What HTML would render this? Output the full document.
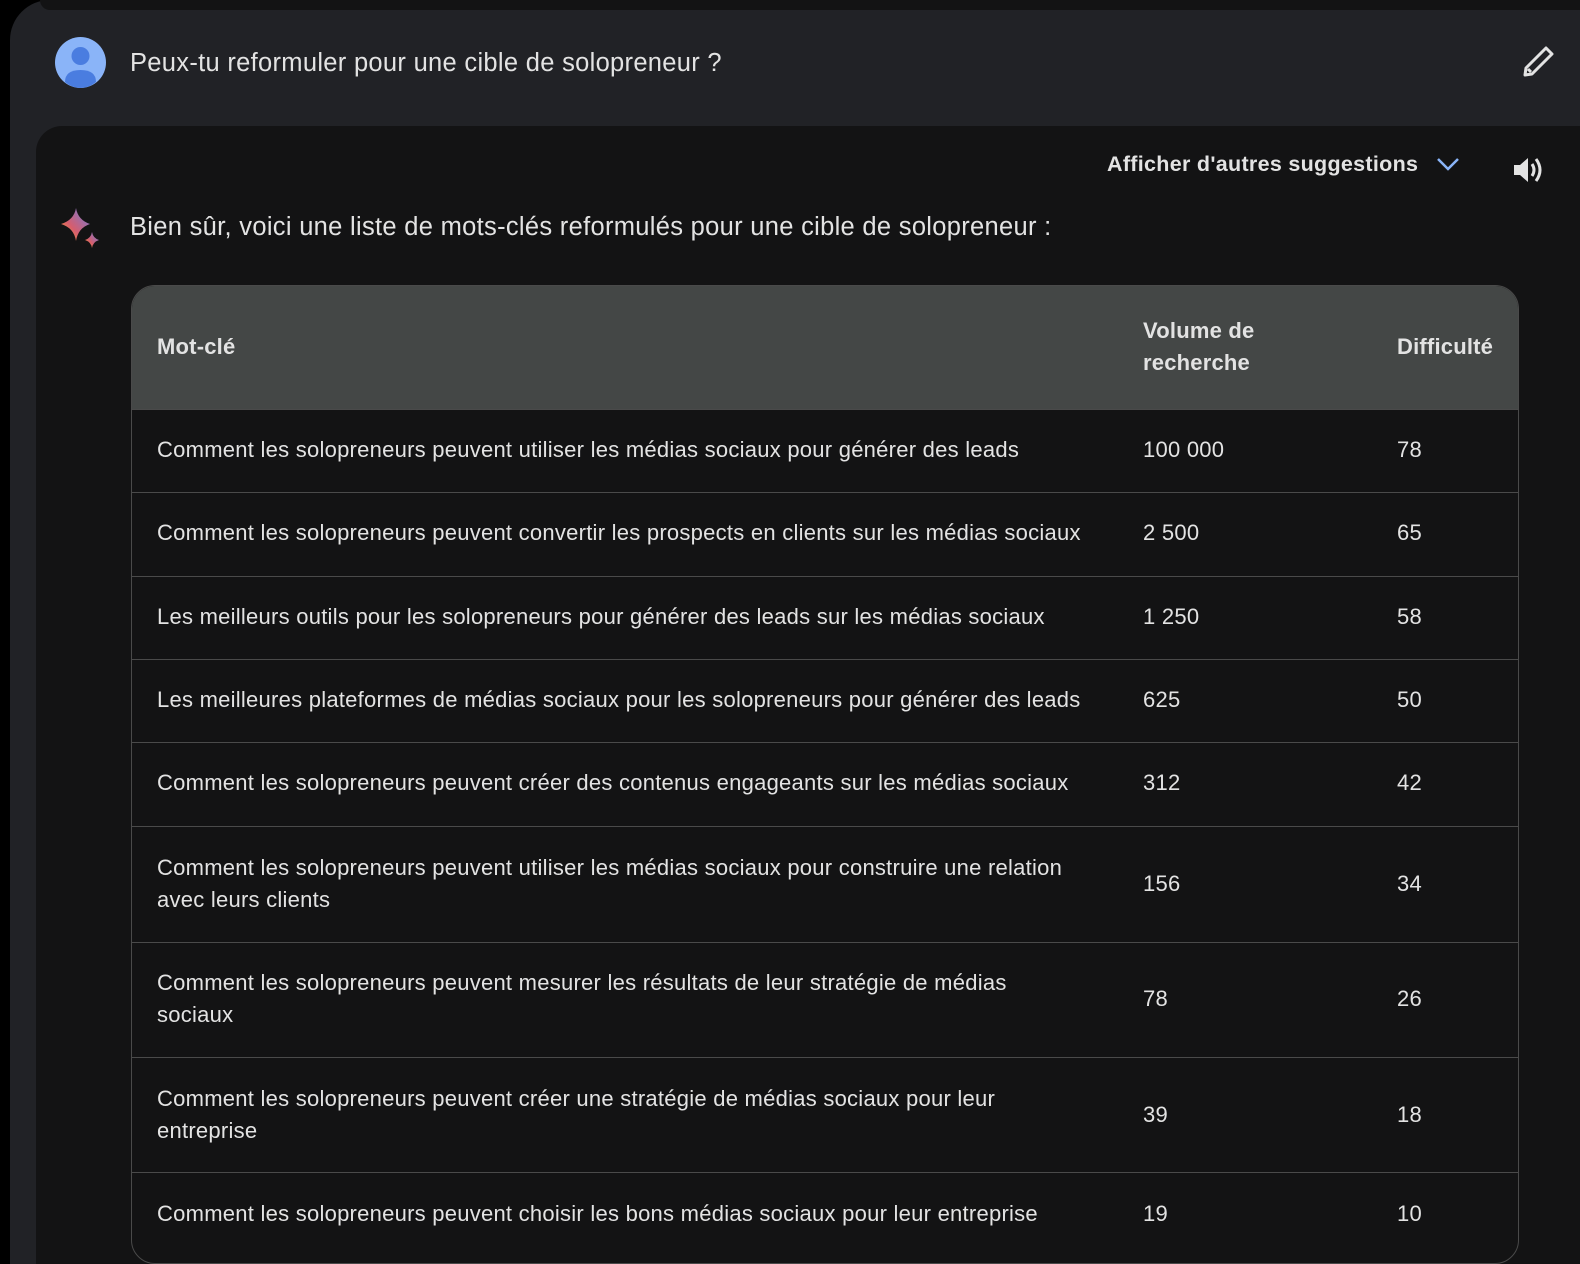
<!DOCTYPE html>
<html style="width:1580px;height:1264px;overflow:hidden"><head><meta charset="utf-8"><style>
*{margin:0;padding:0;box-sizing:border-box}
body{width:1580px;height:1264px;background:#000;overflow:hidden;font-family:"Liberation Sans",Arial,sans-serif;color:#e3e3e3;position:relative}
.outer{position:absolute;left:10px;top:0;width:1570px;height:1264px;background:#212226;border-radius:40px 0 0 0}
.topstrip{position:absolute;left:40px;top:0;width:1540px;height:10px;background:#131314;border-radius:0 0 0 12px}
.resp{position:absolute;left:36px;top:126px;width:1544px;height:1138px;background:#131314;border-radius:26px 0 0 0}
.t{position:absolute;white-space:nowrap;letter-spacing:0.3px}
.tbl{position:absolute;left:131px;top:285px;width:1388px;height:979px;border:1px solid #4a4a4a;border-radius:24px;overflow:hidden}
.hdr{position:absolute;left:0;top:0;width:100%;height:123px;background:#444746}
.row{position:absolute;left:0;width:100%;border-top:1px solid #4a4a4a}
.row div{position:absolute;font-size:22px;line-height:32px;letter-spacing:0.25px;white-space:nowrap}
.c1{left:25px}
.c2{left:1011px}
.c3{left:1265px}
.h{font-weight:bold;font-size:22px;line-height:32px;position:absolute;letter-spacing:0.2px}
</style></head><body>
<div class="outer"></div>
<div class="topstrip"></div>
<svg style="position:absolute;left:55px;top:37px" width="51" height="51" viewBox="0 0 51 51"><circle cx="25.5" cy="25.5" r="25.5" fill="#8ab4f8"/><circle cx="25.5" cy="19" r="9" fill="#4a7de0"/><path d="M10 45 Q10 33 25.5 33 Q41 33 41 45 Q34 51 25.5 51 Q17 51 10 45Z" fill="#4a7de0"/></svg>
<div class="t" style="left:130px;top:47px;font-size:25.5px;line-height:32px">Peux-tu reformuler pour une cible de solopreneur ?</div>
<svg style="position:absolute;left:1520px;top:44px" width="36" height="36" viewBox="0 0 36 36"><path d="M5 31 L6 24 L26 4 L32 10 L12 30 Z M8 25 L11 28" fill="none" stroke="#e3e3e3" stroke-width="3" stroke-linejoin="round"/></svg>
<div class="resp"></div>
<div class="t" style="left:1107px;top:149px;font-size:21.5px;line-height:30px;font-weight:bold">Afficher d'autres suggestions</div>
<svg style="position:absolute;left:1436px;top:156px" width="24" height="16" viewBox="0 0 24 16"><path d="M2 3 L12 13 L22 3" fill="none" stroke="#8ab4f8" stroke-width="2.5"/></svg>
<svg style="position:absolute;left:1512px;top:154px" width="32" height="32" viewBox="0 0 32 32"><path d="M2 11 H8 L16 4 V28 L8 21 H2Z" fill="#e3e3e3"/><path d="M20 10 Q24 16 20 22" fill="none" stroke="#e3e3e3" stroke-width="3"/><path d="M24 5 Q32 16 24 27" fill="none" stroke="#e3e3e3" stroke-width="3"/></svg>
<svg style="position:absolute;left:58px;top:206px" width="44" height="44" viewBox="0 0 44 44"><defs><linearGradient id="g" x1="0" y1="1" x2="1" y2="0"><stop offset="0" stop-color="#f6a623"/><stop offset=".4" stop-color="#d65d6e"/><stop offset="1" stop-color="#6c7fe0"/></linearGradient></defs><path d="M18 2 Q20 14 32 18 Q20 22 18 35 Q16 22 3 18 Q16 14 18 2Z" fill="url(#g)"/><path d="M34 26 Q35 32 41 34 Q35 36 34 42 Q33 36 27 34 Q33 32 34 26Z" fill="url(#g)"/></svg>
<div class="t" style="left:130px;top:211px;font-size:25.5px;line-height:32px">Bien sûr, voici une liste de mots-clés reformulés pour une cible de solopreneur :</div>
<div class="tbl">
<div class="hdr">
<div class="h" style="left:25px;top:45px">Mot-clé</div>
<div class="h" style="left:1011px;top:29px">Volume de<br>recherche</div>
<div class="h" style="left:1265px;top:45px">Difficulté</div>
</div>
<div class="row" style="top:123px;height:83px"><div class="c1" style="top:24px">Comment les solopreneurs peuvent utiliser les médias sociaux pour générer des leads</div><div class="c2" style="top:24px">100 000</div><div class="c3" style="top:24px">78</div></div>
<div class="row" style="top:206px;height:84px"><div class="c1" style="top:24px">Comment les solopreneurs peuvent convertir les prospects en clients sur les médias sociaux</div><div class="c2" style="top:24px">2 500</div><div class="c3" style="top:24px">65</div></div>
<div class="row" style="top:290px;height:83px"><div class="c1" style="top:24px">Les meilleurs outils pour les solopreneurs pour générer des leads sur les médias sociaux</div><div class="c2" style="top:24px">1 250</div><div class="c3" style="top:24px">58</div></div>
<div class="row" style="top:373px;height:83px"><div class="c1" style="top:24px">Les meilleures plateformes de médias sociaux pour les solopreneurs pour générer des leads</div><div class="c2" style="top:24px">625</div><div class="c3" style="top:24px">50</div></div>
<div class="row" style="top:456px;height:84px"><div class="c1" style="top:24px">Comment les solopreneurs peuvent créer des contenus engageants sur les médias sociaux</div><div class="c2" style="top:24px">312</div><div class="c3" style="top:24px">42</div></div>
<div class="row" style="top:540px;height:116px"><div class="c1" style="top:25px">Comment les solopreneurs peuvent utiliser les médias sociaux pour construire une relation<br>avec leurs clients</div><div class="c2" style="top:41px">156</div><div class="c3" style="top:41px">34</div></div>
<div class="row" style="top:656px;height:115px"><div class="c1" style="top:24px">Comment les solopreneurs peuvent mesurer les résultats de leur stratégie de médias<br>sociaux</div><div class="c2" style="top:40px">78</div><div class="c3" style="top:40px">26</div></div>
<div class="row" style="top:771px;height:115px"><div class="c1" style="top:25px">Comment les solopreneurs peuvent créer une stratégie de médias sociaux pour leur<br>entreprise</div><div class="c2" style="top:41px">39</div><div class="c3" style="top:41px">18</div></div>
<div class="row" style="top:886px;height:93px"><div class="c1" style="top:25px">Comment les solopreneurs peuvent choisir les bons médias sociaux pour leur entreprise</div><div class="c2" style="top:25px">19</div><div class="c3" style="top:25px">10</div></div>
</div>
</body></html>
